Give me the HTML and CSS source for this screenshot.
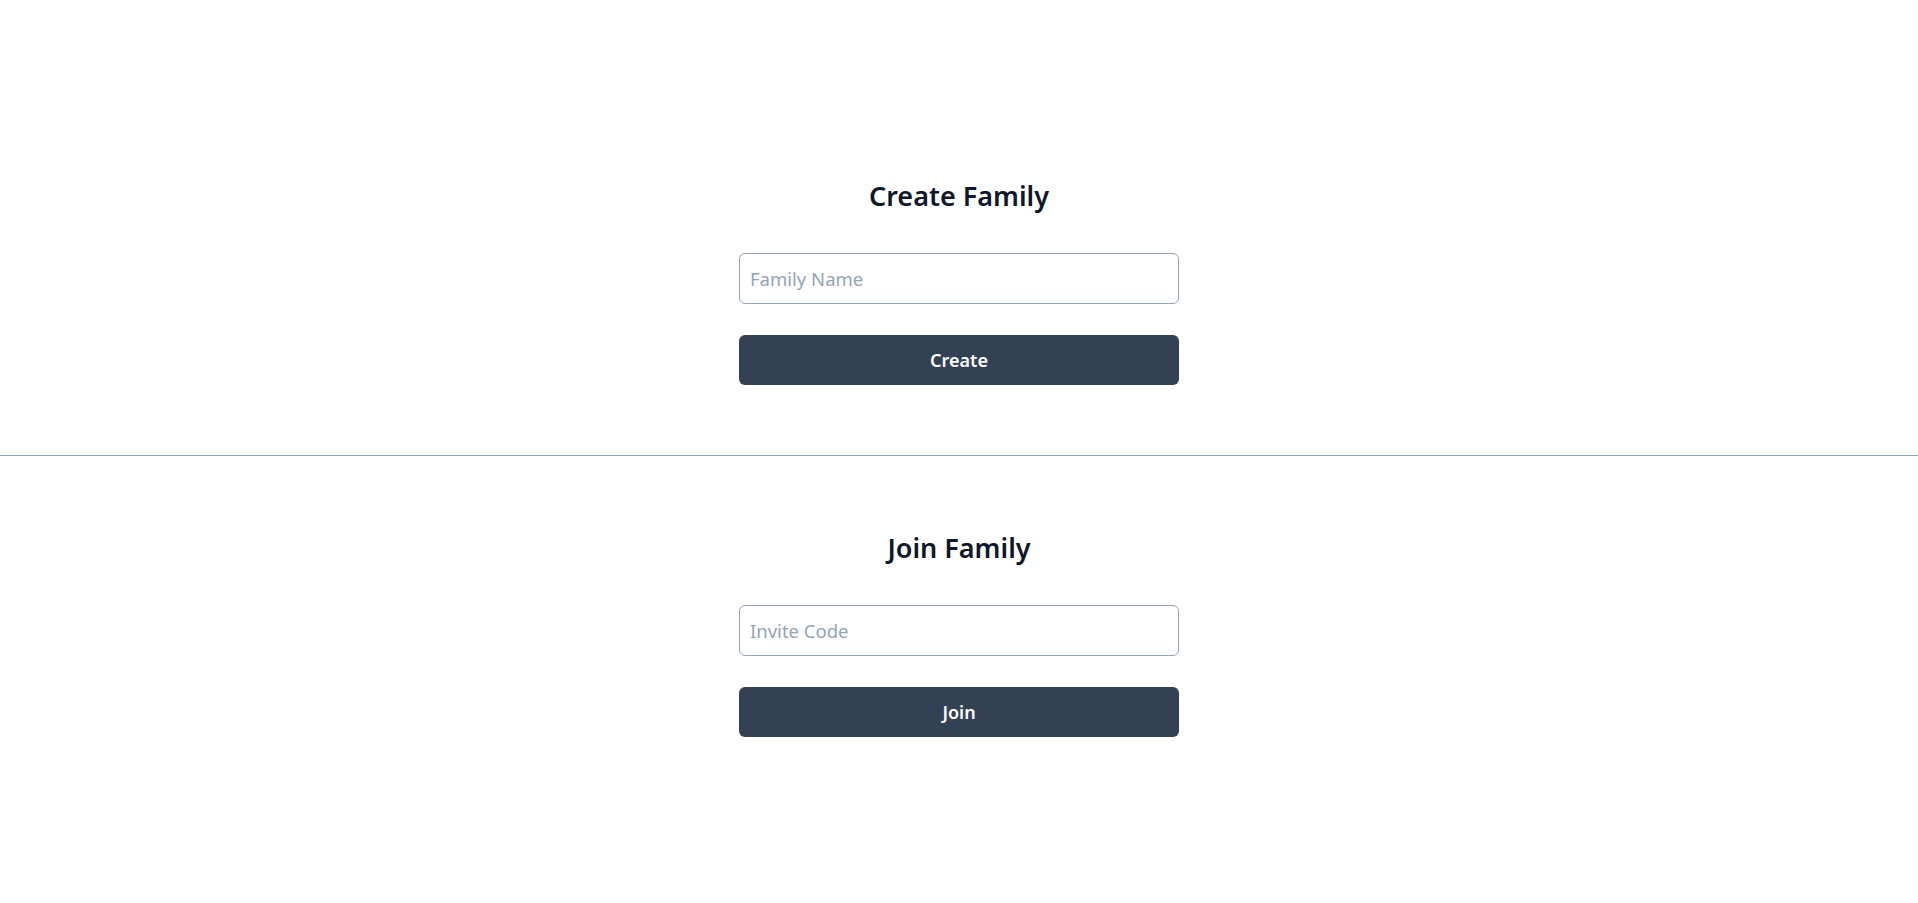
FILE: index.html
```html
<!DOCTYPE html>
<html lang="en">
<head>
<meta charset="utf-8">
<title>Family</title>
<link rel="stylesheet" href="styles.css">
</head>
<body>
<main class="page">
  <section class="panel panel-first">
    <form class="form">
      <h2 class="title">Create Family</h2>
      <input class="field" type="text" placeholder="Family Name">
      <button class="btn" type="button">Create</button>
    </form>
  </section>
  <section class="panel">
    <form class="form">
      <h2 class="title">Join Family</h2>
      <input class="field" type="text" placeholder="Invite Code">
      <button class="btn" type="button">Join</button>
    </form>
  </section>
</main>
</body>
</html>
```

FILE: styles.css
```css
* { box-sizing: border-box; }
html, body { margin: 0; padding: 0; background: #ffffff; }
body {
  font-family: "Noto Sans", "Open Sans", "Liberation Sans", sans-serif;
  color: #0f172a;
}
.page {
  min-height: 100vh;
  padding-top: 7px;
  display: flex;
  flex-direction: column;
  justify-content: center;
}
.panel {
  padding: 74px 0 70px;
  display: flex;
  justify-content: center;
}
.panel-first {
  border-bottom: 1px solid #94a3b8;
}
.form {
  width: 440px;
  display: flex;
  flex-direction: column;
  align-items: stretch;
}
.title {
  margin: 0 0 39px;
  text-align: center;
  font-size: 27px;
  line-height: 36px;
  font-weight: 600;
  color: #0f172a;
}
.field {
  height: 51px;
  border: 1px solid #94a3b8;
  border-radius: 6px;
  padding: 0 10px;
  font-family: inherit;
  font-size: 18.5px;
  color: #0f172a;
  outline: none;
  margin-bottom: 31px;
}
.field::placeholder { color: #94a3b8; }
.btn {
  height: 50px;
  border: none;
  border-radius: 6px;
  background: #334155;
  color: #ffffff;
  font-family: inherit;
  font-size: 18px;
  font-weight: 600;
  cursor: pointer;
}
```
